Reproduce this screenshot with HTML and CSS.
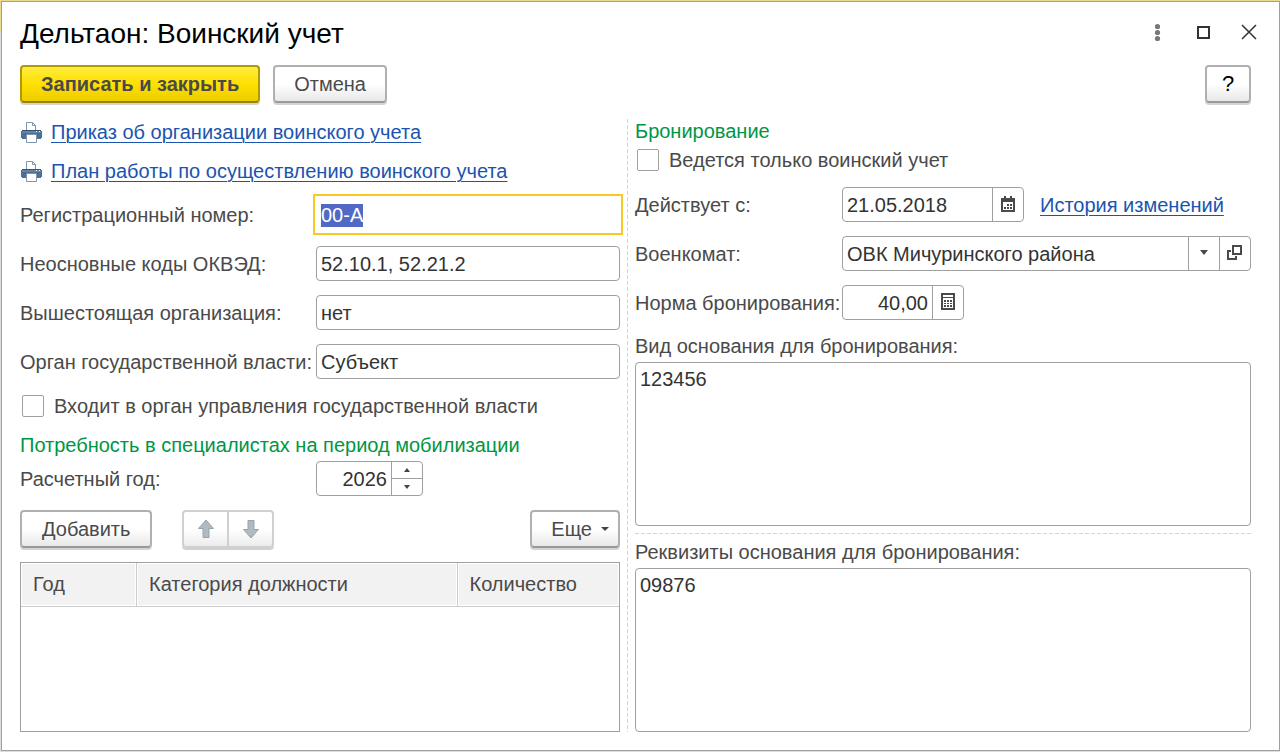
FILE: index.html
```
<!DOCTYPE html>
<html lang="ru">
<head>
    <meta charset="UTF-8">
    <meta name="viewport" content="width=device-width, initial-scale=1.0">
    <title>Дельтаон: Воинский учет</title>
    <link rel="stylesheet" href="styles.css">
</head>
<body>
    <svg class="sprite" width="0" height="0" aria-hidden="true">
        <symbol id="printer" viewBox="0 0 21 21">
            <path d="M5.500 9.500v-9h6l3 3v6" fill="#fff" stroke="#8296aa"/>
            <path d="M11.500 .500v3h3" fill="none" stroke="#8296aa"/>
            <path d="M1 8h19v1h1v7h-1v1H1v-1H0V9h1z" fill="#4f7096"/>
            <path d="M1 8h19v1H1z" fill="#35536f"/>
            <path d="M1 9h19v2H1z" fill="#6484a6"/>
            <path d="M4 12h13v1H4z" fill="#35536f"/>
            <path d="M15 9h1v1h-1zM18 9h1v1h-1z" fill="#fff"/>
            <path d="M5.500 12.500h10v8h-10z" fill="#fff" stroke="#8296aa"/>
        </symbol>
    </svg>
    <div class="window">
        <header class="title-bar">
            <h1>Дельтаон: Воинский учет</h1>
            <div class="window-buttons">
                <button class="icon-btn" aria-label="Меню">
                    <svg width="22" height="22" viewBox="0 0 22 22" fill="#777"><circle cx="11.500" cy="4.500" r="2.600"/><circle cx="11.500" cy="10.500" r="2.600"/><circle cx="11.500" cy="16.500" r="2.600"/></svg>
                </button>
                <button class="icon-btn" aria-label="Развернуть">
                    <svg width="22" height="22" viewBox="0 0 22 22" fill="none" stroke="#333" stroke-width="2"><path d="M6 5h11v11H6z"/></svg>
                </button>
                <button class="icon-btn" aria-label="Закрыть">
                    <svg width="22" height="22" viewBox="0 0 22 22" fill="none" stroke="#333" stroke-width="1.500"><path d="M4 3l14 14M18 3L4 17"/></svg>
                </button>
            </div>
        </header>

        <div class="commands">
            <button class="btn btn-main">Записать и закрыть</button>
            <button class="btn">Отмена</button>
            <button class="btn btn-help">?</button>
        </div>

        <main class="columns">
            <section class="column">
                <div class="print-link">
                    <svg width="21" height="21"><use href="#printer"/></svg>
                    <a href="#">Приказ об организации воинского учета</a>
                </div>
                <div class="print-link">
                    <svg width="21" height="21"><use href="#printer"/></svg>
                    <a href="#">План работы по осуществлению воинского учета</a>
                </div>

                <div class="fields fields-left">
                    <label for="reg-number">Регистрационный номер:</label>
                    <input class="field" type="text" id="reg-number" value="00-А" autofocus>
                    <label for="okved">Неосновные коды ОКВЭД:</label>
                    <input class="field" type="text" id="okved" value="52.10.1, 52.21.2">
                    <label for="parent-org">Вышестоящая организация:</label>
                    <input class="field" type="text" id="parent-org" value="нет">
                    <label for="authority">Орган государственной власти:</label>
                    <input class="field" type="text" id="authority" value="Субъект">
                </div>

                <label class="check"><input type="checkbox">Входит в орган управления государственной власти</label>

                <h2 class="heading-need">Потребность в специалистах на период мобилизации</h2>
                <div class="fields fields-left">
                    <label for="year">Расчетный год:</label>
                    <div class="group year">
                        <input type="number" id="year" value="2026">
                        <div class="spinner">
                            <button aria-label="Больше"><svg width="6" height="4" viewBox="0 0 6 4"><path d="M0 4l3-4 3 4z" fill="#444"/></svg></button>
                            <button aria-label="Меньше"><svg width="6" height="4" viewBox="0 0 6 4"><path d="M0 0l3 4 3-4z" fill="#444"/></svg></button>
                        </div>
                    </div>
                </div>

                <div class="table-commands">
                    <button class="btn btn-add">Добавить</button>
                    <div class="move">
                        <button aria-label="Переместить вверх" disabled>
                            <svg width="18" height="20" viewBox="0 0 18 20"><path d="M9 1l7.500 8.500H12V18.500H6V9.500H1.500z" fill="#b0bac0" stroke="#97a3ab"/></svg>
                        </button>
                        <button aria-label="Переместить вниз" disabled>
                            <svg width="18" height="20" viewBox="0 0 18 20"><path d="M9 19l7.500-8.500H12V1.500H6v9H1.500z" fill="#b0bac0" stroke="#97a3ab"/></svg>
                        </button>
                    </div>
                    <button class="btn btn-more">Еще <svg width="8" height="4" viewBox="0 0 8 4"><path d="M0 0h8L4 4z" fill="#444"/></svg></button>
                </div>

                <div class="table-box">
                    <table>
                        <thead>
                            <tr>
                                <th class="col-year">Год</th>
                                <th class="col-category">Категория должности</th>
                                <th>Количество</th>
                            </tr>
                        </thead>
                        <tbody></tbody>
                    </table>
                </div>
            </section>

            <div class="divider"></div>

            <section class="column">
                <h2 class="heading-booking">Бронирование</h2>
                <label class="check"><input type="checkbox">Ведется только воинский учет</label>

                <div class="fields fields-right">
                    <label for="date">Действует с:</label>
                    <div class="date-row">
                        <div class="group date">
                            <input type="text" id="date" value="21.05.2018">
                            <button class="addon" aria-label="Календарь">
                                <svg width="14" height="16" viewBox="0 0 14 16">
                                    <path d="M1 3h12v12H1z" fill="none" stroke="#4a4a4a" stroke-width="2"/>
                                    <path d="M1 3h12v3H1zM3 0h2v3H3zM9 0h2v3H9z" fill="#4a4a4a"/>
                                    <path d="M6 8h2v2H6zM9 8h2v2H9zM3 11h2v2H3zM6 11h2v2H6zM9 11h2v2H9z" fill="#4a4a4a"/>
                                </svg>
                            </button>
                        </div>
                        <a href="#">История изменений</a>
                    </div>

                    <label for="office">Военкомат:</label>
                    <div class="group">
                        <div class="select-box">
                            <select id="office"><option>ОВК Мичуринского района</option></select>
                            <span class="select-arrow"><svg width="8" height="5" viewBox="0 0 8 5"><path d="M0 0h8L4 5z" fill="#4a4a4a"/></svg></span>
                        </div>
                        <button class="addon" aria-label="Открыть">
                            <svg width="16" height="16" viewBox="0 0 16 16" fill="none" stroke="#4a4a4a" stroke-width="2"><path d="M6 1h8v8H6z"/><path d="M4 6H1v8h8v-3"/></svg>
                        </button>
                    </div>

                    <label for="norm">Норма бронирования:</label>
                    <div class="group norm">
                        <input type="text" id="norm" value="40,00" inputmode="decimal">
                        <button class="addon" aria-label="Калькулятор">
                            <svg width="14" height="17" viewBox="0 0 14 17">
                                <path d="M1 1h12v15H1z" fill="none" stroke="#4a4a4a" stroke-width="2"/>
                                <path d="M2 4h10v1H2z" fill="#4a4a4a"/>
                                <path d="M3 7h2v2H3zM6 7h2v2H6zM9 7h2v2H9zM3 10h2v1H3zM6 10h2v1H6zM9 10h2v1H9zM3 12h2v2H3zM6 12h2v2H6zM9 12h2v2H9z" fill="#4a4a4a"/>
                            </svg>
                        </button>
                    </div>
                </div>

                <label class="area-label" for="basis-type">Вид основания для бронирования:</label>
                <textarea id="basis-type">123456</textarea>
                <div class="divider-h"></div>
                <label class="area-label" for="basis-details">Реквизиты основания для бронирования:</label>
                <textarea id="basis-details">09876</textarea>
            </section>
        </main>
    </div>
    <script>
        const regNumber = document.getElementById('reg-number');
        regNumber.focus();
        regNumber.select();
    </script>
</body>
</html>
```
FILE: styles.css
```
* {
    box-sizing: border-box;
}
body {
    margin: 0;
    padding: 1px 0 1px 1px;
    min-height: 100vh;
    display: flex;
    font-family: Arial, "Liberation Sans", sans-serif;
    font-size: 20px;
    line-height: 24px;
    color: #4a4a4a;
    background: linear-gradient(#e8da8e 32px, #dedede 32px);
}
.sprite {
    position: absolute;
}
.window {
    flex: 1;
    display: flex;
    flex-direction: column;
    padding: 0 28px 18px 18px;
    background-color: #fff;
    border: 1px solid #a0a0a0;
}
button, input, select, textarea {
    font: inherit;
    color: #333;
    margin: 0;
}
a {
    color: #1a54b0;
    text-decoration-thickness: 1px;
    text-underline-offset: 3px;
}
h1 {
    margin: 0;
    font-size: 28px;
    font-weight: normal;
    color: #000;
}
h2 {
    margin: 0;
    font-size: 20px;
    font-weight: normal;
    color: #009646;
}

/* title and command bar */
.title-bar {
    display: flex;
    align-items: center;
    justify-content: space-between;
    height: 63px;
}
.window-buttons {
    display: flex;
    gap: 24px;
    margin-right: -9px;
    padding-bottom: 2px;
}
.icon-btn {
    display: flex;
    padding: 0;
    border: none;
    background: none;
}
.commands {
    display: flex;
    gap: 13px;
    margin-bottom: 16px;
}
.btn {
    height: 38px;
    padding: 0 19px;
    color: #4a4a4a;
    background: linear-gradient(#fff 50%, #e8e8e8);
    border: 2px solid #b0b0b0;
    border-bottom-color: #999;
    border-radius: 4px;
    box-shadow: 0 2px 0 #d4d4d4;
}
.btn-main {
    font-weight: bold;
    background: linear-gradient(#ffec40, #ffe000 50%, #eccd00);
    border-color: #b09a00;
    border-bottom-color: #978400;
}
.btn-help {
    margin-left: auto;
    width: 46px;
    padding: 0;
    font-size: 22px;
    color: #000;
}

/* two columns with a dashed line between */
.columns {
    flex: 1;
    display: grid;
    grid-template-columns: 600fr 1px 616fr;
    gap: 7px;
}
.column {
    display: flex;
    flex-direction: column;
    min-width: 0;
}
.divider {
    background: repeating-linear-gradient(#d4d4d4 0 4px, transparent 4px 6px);
}
.divider-h {
    height: 1px;
    margin: 7px 0 6px;
    background: repeating-linear-gradient(90deg, #d4d4d4 0 4px, transparent 4px 6px);
}
.print-link {
    display: flex;
    align-items: center;
    gap: 9px;
    height: 26px;
    margin-bottom: 13px;
    padding-left: 1px;
}
.fields {
    display: grid;
    gap: 14px 0;
    align-items: center;
}
.fields-left {
    grid-template-columns: 296px 1fr;
}
.fields-right {
    grid-template-columns: 207px 1fr;
}
.field, .group {
    height: 35px;
    border: 1px solid #a0a0a0;
    border-radius: 4px;
    background-color: #fff;
}
.field {
    width: 100%;
    padding: 2px 4px 0;
}
.field:focus {
    border-color: transparent;
    border-radius: 0;
    outline: 2px solid #f8c922;
    outline-offset: 1px;
}
.field::selection {
    color: #fff;
    background-color: #5069c4;
}
.group {
    display: flex;
    min-width: 0;
}
.group input, .group select {
    flex: 1;
    width: 100%;
    min-width: 0;
    padding: 0 4px;
    border: none;
    background: none;
    appearance: none;
}
.year {
    width: 107px;
}
.date {
    width: 182px;
}
.norm {
    width: 122px;
}
.year input, .norm input {
    text-align: right;
}
.year input {
    appearance: textfield;
}
.year input::-webkit-inner-spin-button {
    display: none;
}
.addon, .select-arrow {
    display: flex;
    align-items: center;
    justify-content: center;
    width: 31px;
    padding: 0 0 2px;
    border: none;
    border-left: 1px solid #a0a0a0;
    background: none;
}
.select-box {
    flex: 1;
    display: flex;
    position: relative;
}
.select-arrow {
    position: absolute;
    top: 0;
    right: 0;
    bottom: 0;
    pointer-events: none;
}
.spinner {
    display: flex;
    flex-direction: column;
    width: 31px;
    border-left: 1px solid #a0a0a0;
}
.spinner button {
    flex: 1;
    display: flex;
    align-items: center;
    justify-content: center;
    padding: 0;
    border: none;
    background: none;
}
.spinner button + button {
    border-top: 1px solid #a0a0a0;
}
.date-row {
    display: flex;
    align-items: center;
    gap: 16px;
}
.check {
    display: flex;
    align-items: center;
    gap: 10px;
    height: 22px;
    margin: 16px 0;
}
.check input {
    appearance: none;
    width: 22px;
    height: 22px;
    margin-left: 2px;
    border: 1px solid #a0a0a0;
    border-radius: 2px;
}
.heading-need {
    margin-bottom: 4px;
}
.heading-booking + .check {
    margin-top: 6px;
}

/* specialists table */
.table-commands {
    display: flex;
    margin: 14px 0;
}
.btn-add {
    padding: 0 20px;
}
.move {
    display: flex;
    width: 92px;
    height: 38px;
    margin-left: 30px;
    border: 2px solid #d0d0d0;
    border-radius: 4px;
    background: linear-gradient(#fff 50%, #ececec);
    box-shadow: 0 2px 0 #d0d0d0;
}
.move button {
    flex: 1;
    display: flex;
    align-items: center;
    justify-content: center;
    padding: 0;
    border: none;
    background: none;
}
.move button + button {
    border-left: 2px solid #d0d0d0;
}
.btn-more {
    display: flex;
    align-items: center;
    gap: 9px;
    margin-left: auto;
    padding-right: 9px;
}
.table-box {
    flex: 1;
    border: 1px solid #a0a0a0;
}
table {
    width: 100%;
    table-layout: fixed;
    border-collapse: separate;
    border-spacing: 0;
}
th {
    height: 44px;
    padding: 0 12px 2px;
    font-weight: normal;
    text-align: left;
    background-color: #f2f2f2;
    border-right: 1px solid #ccc;
    border-bottom: 1px solid #ccc;
    box-shadow: inset 0 0 0 1px #fff;
}
th:last-child {
    border-right: none;
}
.col-year {
    width: 19.4%;
}
.col-category {
    width: 53.6%;
}

/* multiline fields */
.area-label {
    margin: 14px 0 4px;
}
.divider-h + .area-label {
    margin-top: 0;
}
textarea {
    flex: 1;
    width: 100%;
    min-height: 60px;
    padding: 4px;
    border: 1px solid #a0a0a0;
    border-radius: 4px;
    resize: none;
}
```
